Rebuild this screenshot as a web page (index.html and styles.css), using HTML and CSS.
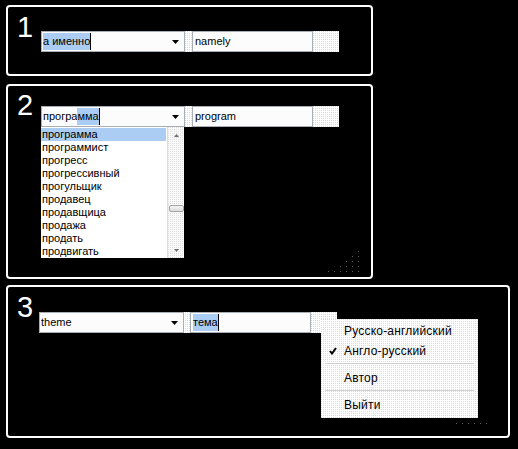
FILE: index.html
```html
<!DOCTYPE html>
<html lang="ru">
<head>
<meta charset="utf-8">
<title>Словарь</title>
<link rel="stylesheet" href="styles.css">
</head>
<body>
<div class="page">

  <section class="panel panel-one">
    <div class="num">1</div>
    <div class="bar">
      <div class="combo">
        <span class="txt"><span class="sel">а именно</span><span class="caret"></span></span>
        <svg class="arrow" width="7" height="4" viewBox="0 0 7 4"><polygon points="0,0 7,0 3.5,4" fill="#000"/></svg>
      </div>
      <div class="edit"><span class="txt">namely</span></div>
    </div>
  </section>

  <section class="panel panel-two">
    <div class="num">2</div>
    <div class="bar">
      <div class="combo">
        <span class="txt">програ<span class="sel">мма</span><span class="caret"></span></span>
        <svg class="arrow" width="7" height="4" viewBox="0 0 7 4"><polygon points="0,0 7,0 3.5,4" fill="#000"/></svg>
        <div class="listbox">
          <ul class="items">
            <li class="item item-active">программа</li>
            <li class="item">программист</li>
            <li class="item">прогресс</li>
            <li class="item">прогрессивный</li>
            <li class="item">прогульщик</li>
            <li class="item">продавец</li>
            <li class="item">продавщица</li>
            <li class="item">продажа</li>
            <li class="item">продать</li>
            <li class="item">продвигать</li>
          </ul>
          <div class="scroll">
            <svg class="sarrow" width="5" height="3" viewBox="0 0 5 3"><polygon points="0,3 5,3 2.5,0" fill="#707070"/></svg>
            <div class="thumb"></div>
            <svg class="sarrow" width="5" height="3" viewBox="0 0 5 3"><polygon points="0,0 5,0 2.5,3" fill="#707070"/></svg>
          </div>
        </div>
      </div>
      <div class="edit"><span class="txt">program</span></div>
    </div>
    <div class="grip grip-two"></div>
  </section>

  <section class="panel panel-three">
    <div class="num">3</div>
    <div class="bar bar-three">
      <div class="combo">
        <span class="txt">theme</span>
        <svg class="arrow" width="7" height="4" viewBox="0 0 7 4"><polygon points="0,0 7,0 3.5,4" fill="#000"/></svg>
      </div>
      <div class="edit"><span class="txt"><span class="sel">тема</span><span class="caret"></span></span></div>
      <div class="menu">
        <div class="mitem"><span class="check"></span>Русско-английский</div>
        <div class="mitem"><span class="check"><svg width="8" height="8" viewBox="0 0 8 8"><polyline points="1,4 3,6.5 7,1" fill="none" stroke="#000" stroke-width="2"/></svg></span>Англо-русский</div>
        <div class="msep"></div>
        <div class="mitem"><span class="check"></span>Автор</div>
        <div class="msep"></div>
        <div class="mitem"><span class="check"></span>Выйти</div>
      </div>
    </div>
    <div class="grip grip-three"></div>
  </section>

</div>
</body>
</html>
```

FILE: styles.css
```css
html, body {
  margin: 0;
  padding: 0;
  background: #000;
}

.page {
  display: flex;
  flex-direction: column;
  align-items: flex-start;
  padding: 5px 0 0 6px;
  gap: 8px;
  font-family: "Liberation Sans", Arial, sans-serif;
}

.panel {
  box-sizing: border-box;
  border: 2px solid #fff;
  border-radius: 4px;
  display: flex;
  align-items: flex-start;
  padding: 6px 0 0 9px;
  position: relative;
}

.panel-one { width: 367px; height: 71px; }
.panel-two { width: 367px; height: 195px; padding-top: 5px; }
.panel-three { width: 504px; height: 153px; margin-top: -2px; }

.num {
  width: 24px;
  color: #fff;
  font-size: 29px;
  line-height: 29px;
}

.bar {
  display: flex;
  gap: 7px;
  width: 298px;
  height: 21px;
  margin-top: 18px;
  position: relative;
  background-color: #fff;
  background-image: conic-gradient(at 1px 1px, #fff 0 270deg, #d9d9d9 0);
  background-size: 2px 2px;
}

.panel-two .bar { margin-top: 15px; }
.bar-three { margin-top: 19px; margin-left: -2px; gap: 6px; }

.combo, .edit {
  box-sizing: border-box;
  height: 21px;
  border: 1px solid #a9aeb4;
  background: #fcfcfc;
  display: flex;
  align-items: center;
  padding: 0 5px 0 1px;
  font-size: 11px;
  color: #000;
  position: relative;
}

.combo { width: 144px; justify-content: space-between; }
.edit { width: 121px; padding-left: 2px; }
.bar-three .combo { width: 145px; }

.txt {
  display: flex;
  align-items: center;
  height: 17px;
  line-height: 17px;
  white-space: nowrap;
}

.sel { background: #abcdf4; }

.caret {
  display: inline-block;
  width: 1px;
  height: 17px;
  background: #000;
}

.arrow { display: block; flex: none; }

.listbox {
  position: absolute;
  left: -1px;
  top: 20px;
  width: 143px;
  height: 131px;
  background: #fff;
  display: flex;
  z-index: 2;
}

.items {
  list-style: none;
  margin: 0;
  padding: 1px 0 0 0;
  flex: 1;
}

.item {
  height: 13px;
  line-height: 13px;
  padding-left: 1px;
  font-size: 11px;
  white-space: nowrap;
}

.item-active { background: #abcdf4; margin-right: 1px; }

.scroll {
  box-sizing: border-box;
  width: 17px;
  border-left: 1px solid #dcdcdc;
  background-color: #fafafa;
  background-image: conic-gradient(at 1px 1px, #fafafa 0 270deg, #dddddd 0);
  background-size: 2px 2px;
  display: flex;
  flex-direction: column;
  align-items: center;
  padding: 7px 0 6px;
}

.sarrow { display: block; }

.thumb {
  box-sizing: border-box;
  width: 15px;
  height: 7px;
  margin: 68px 0 auto;
  border: 1px solid #a4a4a4;
  border-radius: 2px;
  background: linear-gradient(#f4f4f4, #dcdcdc);
}

.menu {
  position: absolute;
  left: 282px;
  top: 7px;
  width: 157px;
  box-sizing: border-box;
  padding: 2px 0 3px;
  background-color: #fff;
  background-image: conic-gradient(at 1px 1px, #fff 0 270deg, #dcdcdc 0);
  background-size: 2px 2px;
  font-size: 12px;
  color: #000;
  z-index: 3;
}

.mitem {
  display: flex;
  align-items: center;
  height: 20px;
  white-space: nowrap;
  letter-spacing: 0.2px;
}

.check {
  width: 22px;
  display: flex;
  justify-content: center;
  padding-left: 1px;
}

.check svg { display: block; }

.msep {
  height: 1px;
  margin: 2px 4px 4px;
  background: #d0d0d0;
}

.grip {
  position: absolute;
  background-image: conic-gradient(at 1px 1px, transparent 0 270deg, #5e5e5e 0);
  background-size: 6px 5px;
}

.grip-two { right: 9px; bottom: 1px; width: 40px; height: 30px; clip-path: polygon(100% 0, 100% 100%, 0 100%); }
.grip-three { right: 18px; bottom: 10px; width: 34px; height: 3px; }
```
